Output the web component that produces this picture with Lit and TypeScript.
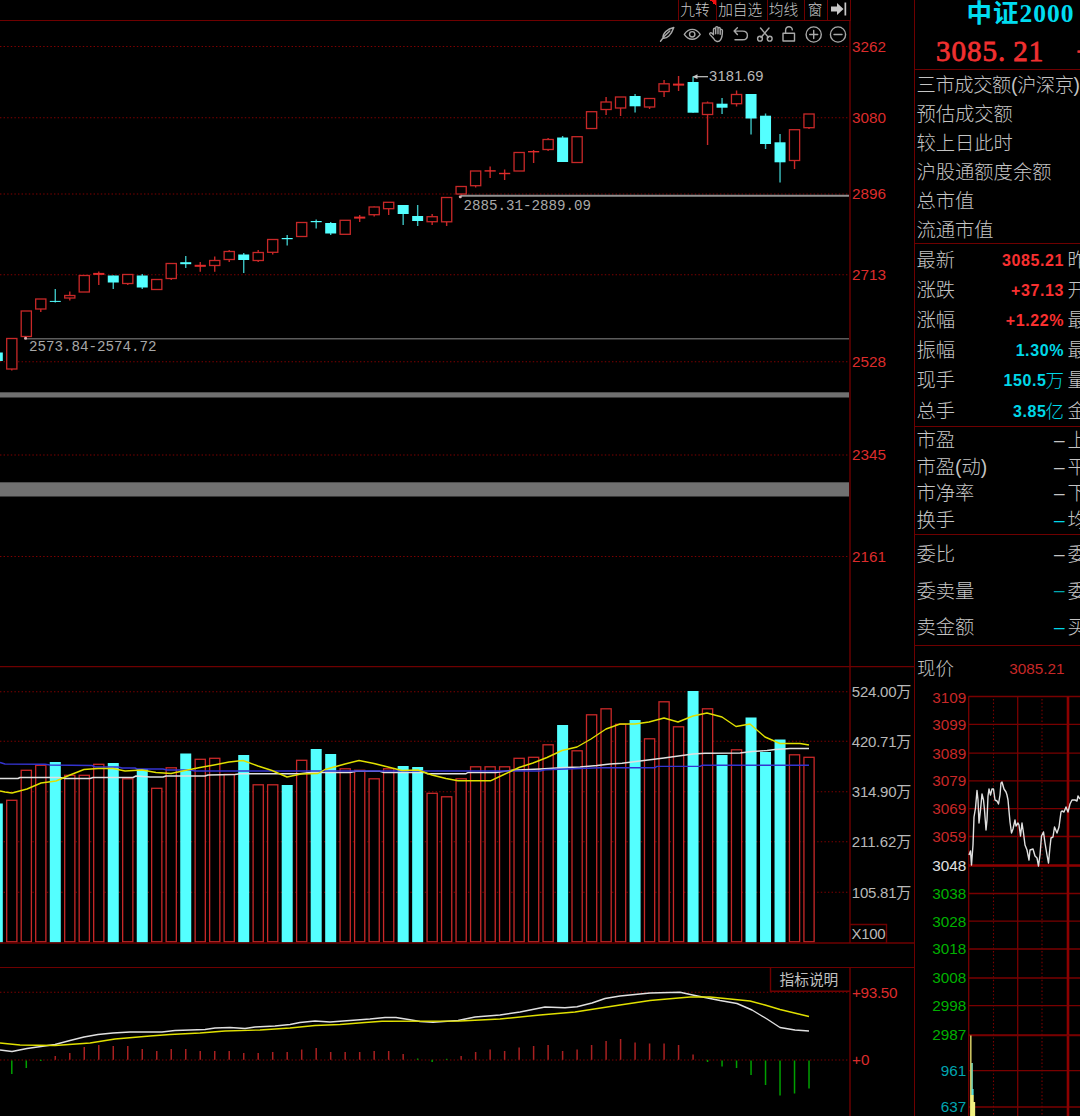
import { LitElement, html, svg, css } from "lit";
import { customElement } from "lit/decorators.js";

/** [kind, body top, body bottom, high, low, volume top, histogram end]; kind u = up, d = down */
type Day = [string, number, number, number, number, number, number];

const DAYS: Day[] = [
  ["d", 352.5, 361, 352.5, 361, 803.5, 1060],
  ["u", 338.5, 369, 338.5, 370.5, 800, 1074],
  ["u", 311, 336.5, 311, 338, 770, 1068],
  ["u", 299, 309, 299, 312, 765, 1061],
  ["d", 300.9, 301.9, 289, 302.5, 762, 1056],
  ["u", 295.5, 298, 291.5, 300.5, 775, 1053],
  ["u", 275.5, 292, 275.5, 292, 775, 1047],
  ["u", 273.3, 274.5, 271.5, 285, 764, 1045],
  ["d", 275.5, 282.5, 275.5, 289, 763, 1046],
  ["u", 274.5, 283.5, 274.5, 285, 778.5, 1046],
  ["d", 275.5, 287.5, 274, 289, 769, 1049],
  ["u", 279.5, 289.5, 279.5, 289.5, 788, 1051],
  ["u", 263.5, 278.5, 263.5, 280, 767.5, 1049],
  ["d", 262.2, 264.2, 256, 268, 753.5, 1049],
  ["u", 265.2, 266.4, 262, 271.8, 759, 1051],
  ["u", 260.5, 265.5, 256.5, 271.8, 758, 1051],
  ["u", 251.5, 259.5, 250, 262, 774, 1051],
  ["d", 254.5, 260, 253, 273, 755, 1053],
  ["u", 252.5, 260.5, 250, 262, 784.5, 1053],
  ["u", 239.5, 252.3, 239.5, 254.5, 784.5, 1052],
  ["d", 238, 239.2, 235, 245.5, 785, 1052],
  ["u", 222.5, 236.5, 222.5, 236.5, 760, 1049.5],
  ["d", 221, 222.2, 219.5, 228.5, 749, 1048],
  ["d", 223, 233.5, 222, 235, 754, 1052],
  ["u", 220.3, 234.3, 220.3, 234.3, 768.5, 1052],
  ["u", 217, 218.2, 215, 222, 770, 1052],
  ["u", 207, 214.7, 206.5, 216.5, 778.5, 1051],
  ["u", 202.3, 208.7, 202.3, 215, 768.5, 1051],
  ["d", 205, 214, 205, 225, 766, 1054],
  ["d", 216, 221, 205, 226, 767, 1058.5],
  ["u", 216.7, 221.7, 214, 225, 793, 1062],
  ["u", 197.5, 221.8, 197.5, 226, 796.5, 1058.8],
  ["u", 186.5, 194, 186.5, 195, 778.5, 1056],
  ["u", 171, 185.7, 171, 187.5, 766.5, 1052],
  ["u", 170.6, 171.2, 166.5, 178, 766.5, 1049.5],
  ["u", 173.2, 173.8, 169.5, 180, 766.5, 1051],
  ["u", 152.5, 171, 152.5, 171, 758, 1047.5],
  ["u", 151.4, 152, 150, 163, 757, 1046],
  ["u", 139.5, 149.5, 138, 151, 744.5, 1045],
  ["d", 137.5, 162, 136, 162, 725, 1051],
  ["u", 136.7, 162.5, 136.7, 162.5, 750.5, 1049.5],
  ["u", 111.7, 128.5, 111.7, 128.5, 714.5, 1045],
  ["u", 102, 109.5, 97, 115, 708.5, 1041],
  ["u", 97, 108, 97, 116, 724, 1039],
  ["d", 96, 106.3, 94, 112.5, 720, 1042.5],
  ["u", 98.5, 107, 98.5, 109, 738.5, 1043.5],
  ["u", 83.8, 91.5, 80, 97, 701.5, 1043.5],
  ["u", 84, 85.2, 76, 91, 726.5, 1045],
  ["d", 82, 112.7, 76.5, 112.7, 691, 1054.5],
  ["u", 103, 114.5, 101.5, 145, 708.5, 1062],
  ["d", 103.7, 107.7, 98, 114, 755, 1066.5],
  ["u", 94.5, 103.7, 90.5, 106.5, 749.5, 1068],
  ["d", 94, 118.5, 94, 134.5, 717.5, 1075],
  ["d", 115.7, 144, 113.5, 149, 752, 1085],
  ["d", 142.3, 162.3, 134, 182.5, 739.5, 1095.5],
  ["u", 129.7, 160.5, 129.7, 169, 754.5, 1093.5],
  ["u", 114, 127.7, 114, 129, 757, 1088.5],
];
const dayX = (i: number) => 11.8 + 14.495 * (i - 1);
const HALF = 5.1;

const VOL_FAST =
  "0,791 5,792 12,793 27,789 41,783 56,781 70,775 84,769.5 98,768.5 113,768.5 125,771 142,770 156,772.5 171,773.5 185,770.5 200,767.5 214,765 229,762 243,760.5 258,766 272,770.5 287,777 301,774 318,773.5 325,769.5 345,764 359,760.5 374,763.5 388,767 402,770.5 418,770 432,775 446,778.5 458,780.7 491,780.7 505,774 519,767.5 533,763 547,757.5 562,750.5 577,747 591,739 606,729 620,724 635,724 649,722 664,718 678,722 693,716 707,713 722,717 736,726.5 750,724 765,737 780,743.5 800,743.5 809,745";
const VOL_MID =
  "0,778.5 18,778.5 20,777.5 60,777.5 65,778.5 90,778.5 93,777.5 133,777.5 136,776 150,777 163,777 166,776 205,776 208,775 235,774.5 240,773.7 300,773.7 310,772.5 350,772.5 356,771.3 380,771.3 384,772.5 425,772.5 427,773.7 466,773.7 468,772.5 496,772.5 512,770.3 540,769 565,767.5 580,767 597,765.5 610,764 622,763.3 640,761 664,758 693,754 705,753.3 740,753 752,751.5 767,750.5 775,749.5 790,748.5 809,748.5";
const VOL_SLOW =
  "0,762.5 5,764 45,764.3 50,765 92,765.5 95,767 118,767 122,768 135,768 137,769 163,769 167,770 190,770 195,771 540,771 545,769.7 600,767.7 655,767.7 657,766.4 700,766.4 702,765.3 809,765.3";
const DIF =
  "0,1050 12,1051.5 27,1048.5 41,1046.5 55,1044.5 70,1040.5 84,1037 98,1034.5 113,1033 130,1032 162,1032 175,1030.5 205,1029.5 215,1028 230,1027.5 245,1028.5 255,1027 275,1026 290,1024.5 300,1022.5 315,1021 330,1022 350,1020.5 370,1019 385,1017.5 396,1017.5 410,1019.7 420,1021.5 433,1022.3 458,1020.5 475,1017 500,1015 520,1012 545,1007 565,1007.7 577,1006.7 592,1003 605,998.5 620,996 650,993 680,992.3 695,995.5 720,1000.5 737,1003.5 752,1010 767,1019 780,1027.5 795,1030 809,1031";
const DEA =
  "0,1043 20,1045 55,1045.5 90,1043 115,1039 150,1036 170,1034.5 200,1033 225,1031 260,1030 290,1028 315,1025.5 340,1024.5 365,1022.5 382,1021.3 460,1021 500,1019 540,1015 575,1012 620,1005 650,1000.5 690,997 710,997 750,1001 765,1005 780,1009.5 809,1016.5";
const PRICE =
  "969,855 970.5,851 971.5,865 973,845 974,817 975.5,808 977,790.5 978,800 979,823 980.5,810 982,794 983.5,800 984.5,810 986,830 987,820 988,796 989,789 990.5,795 992,789 993.5,789 995,800 997,801 998.5,804 1000,795 1001,783 1002,782 1004,789 1006,792 1007,795 1008,800 1010,822 1011.5,833 1013,829 1015,820 1016,826 1018,823 1019,825 1020.5,836 1022,823 1023.5,833 1025,845 1027,850 1029,860 1030,850 1033,849 1035,856 1037,858 1038.5,866 1040,855 1041.5,836 1043.5,832 1045,843 1047,855 1048.5,863 1050,847 1051,838 1053,837 1054.5,827 1057,833 1059,827 1061,812 1062,811 1064,812 1066,807 1068,812 1070,804 1072,800 1075,800 1077,801 1078,796 1080,799";

const chartStyles = css`
  :host { display: block; }
  svg { display: block; }
  text { font-family: "Liberation Sans", "Noto Sans CJK SC", sans-serif; }
  .rule { stroke: #6e0000; stroke-width: 1.4; fill: none; }
  .dots { stroke: #800000; stroke-width: 1.1; stroke-dasharray: 1.4 2.2; fill: none; }
  .up { fill: #000; stroke: #c82828; stroke-width: 1.3; }
  .flat { fill: #e02c2c; }
  .wick-up { stroke: #c82828; stroke-width: 1.4; }
  .down { fill: #54ffff; }
  .wick-down { stroke: #3cc0c0; stroke-width: 1.4; }
  .price { fill: #dc2c2c; font-size: 15.3px; }
  .qty { fill: #b8b8b8; font-size: 15px; }
  .note { fill: #a8a8a8; font-family: "Liberation Mono", monospace; font-size: 14.2px; }
  .peak { fill: #b8b8b8; font-size: 14.7px; }
  .zone { fill: #707070; }
  .line { fill: none; stroke-width: 1.4; stroke-linejoin: round; }
  .yellow { stroke: #e0e000; }
  .white { stroke: #e0e0e0; }
  .blue { stroke: #3434d0; }
`;

@customElement("candle-chart")
class CandleChart extends LitElement {
  static styles = [chartStyles, css`
    .icon { fill: none; stroke: #a8a8a8; stroke-width: 1.4; stroke-linecap: round; stroke-linejoin: round; }
    .arrow { stroke: #c8c8c8; stroke-width: 1.2; fill: none; }
  `];
  render() {
    const levels: [number, string][] = [
      [46.5, "3262"], [117.7, "3080"], [194, "2896"], [274.8, "2713"],
      [361.7, "2528"], [455, "2345"], [556.5, "2161"],
    ];
    return html`<svg width="914" height="645" viewBox="0 21 914 645">
      ${levels.map(([y, t]) => svg`
        <path class="dots" d="M0 ${y}H849"/>
        <text class="price" x="852" y=${y + 5.2}>${t}</text>`)}
      <rect class="zone" x="0" y="392.3" width="849" height="5.2"/>
      <rect class="zone" x="0" y="482.3" width="849" height="14.2"/>
      <path d="M26 338.7H849" stroke="#5c5c5c" stroke-width="1.4"/>
      <path d="M461 195.7H849" stroke="#909090" stroke-width="2"/>
      ${DAYS.map(([k, t, b, h, l], i) => {
        const x = dayX(i);
        if (k === "d") {
          return svg`<path class="wick-down" d="M${x} ${h}V${l}"/><rect class="down" x=${x - 5.5} y=${t} width="11" height=${b - t}/>`;
        }
        const body = b - t < 2
          ? svg`<rect class="flat" x=${x - 5.6} y=${t - 0.4} width="11.2" height=${b - t + 0.8}/>`
          : svg`<rect class="up" x=${x - HALF} y=${t} width=${HALF * 2} height=${b - t}/>`;
        return svg`<path class="wick-up" d="M${x} ${h}V${l}"/>${body}`;
      })}
      <circle cx="25.5" cy="338.3" r="1.5" fill="#d8b0b0"/>
      <circle cx="460.3" cy="196.8" r="1.5" fill="#d8b0b0"/>
      <text class="note" x="29" y="351" textLength="127.5">2573.84-2574.72</text>
      <text class="note" x="463.5" y="210" textLength="127.5">2885.31-2889.09</text>
      <path class="arrow" d="M693.5 76.7H708"/>
      <path d="M692.5 76.7l5-2.4v4.8z" fill="#c8c8c8"/>
      <text class="peak" x="709" y="81" textLength="54.5">3181.69</text>
      <path class="rule" d="M850 21V666"/>
      <g class="icon">
        <path d="M660.5 41.2l4-5.2M663 38.300c-.6-4.800 4.500-9.600 10.800-10.800c-1 3-2.600 6-5 8.600c-1.700 1.700-3.600 2.400-5.800 2.200zM664.600 36l5.200-5"/>
        <path d="M684.300 34.300c4.500-6.600 11.400-6.600 15.900 0c-4.500 6.600-11.400 6.600-15.900 0z"/><circle cx="692.2" cy="34.300" r="2.700"/>
        <path d="M713.600 38.500l-3.600-3.900c-1-1.300.6-2.500 1.800-1.500l1.700 1.600v-5.200c0-1.600 2.100-1.600 2.200 0v4.300v-6c0-1.600 2.300-1.600 2.300 0v6v-5.200c0-1.500 2.200-1.500 2.200 0v5.600v-3.800c0-1.500 2.200-1.400 2.200.1c0 3.500.2 6.500-1.900 9.400c-1.600 2.400-5.300 2.200-6.900-1.400z"/>
        <path d="M737.400 27.800l-3.300 3.300l3.300 3.300M734.300 31.100h8.300c6.400 0 6.400 8.600 0 8.600h-7.600"/>
        <path d="M760.500 28l8 9.500M769 28l-8 9.500"/><circle cx="760" cy="38.700" r="2.400"/><circle cx="769.700" cy="38.700" r="2.400"/>
        <path d="M783 33.300h11.500v7.700h-11.500zM785.600 33.300v-3c0-4.700 6.700-4.700 6.700-.4"/>
        <circle cx="813.700" cy="34.500" r="7.600"/><path d="M809.700 34.500h8M813.700 30.500v8"/>
        <circle cx="838" cy="34.500" r="7.600"/><path d="M834 34.500h8"/>
      </g>
    </svg>`;
  }
}

@customElement("volume-chart")
class VolumeChart extends LitElement {
  static styles = chartStyles;
  render() {
    const levels: [number, string][] = [
      [691.7, "524.00万"], [741.2, "420.71万"], [791.7, "314.90万"], [841.7, "211.62万"], [892.3, "105.81万"],
    ];
    return html`<svg width="914" height="278" viewBox="0 666 914 278">
      ${levels.map(([y, t]) => svg`
        <path class="dots" d="M0 ${y}H849"/>
        <text class="qty" x="851.8" y=${y + 5.6} textLength="59.5">${t}</text>`)}
      ${DAYS.map(([k, , , , , v], i) => {
        const x = dayX(i);
        return k === "u"
          ? svg`<rect class="up" x=${x - HALF} y=${v + 0.3} width=${HALF * 2} height=${941.5 - v}/>`
          : svg`<rect class="down" x=${x - 5.5} y=${v} width="11" height=${942.5 - v}/>`;
      })}
      <polyline class="line white" points=${VOL_MID}/>
      <polyline class="line blue" points=${VOL_SLOW}/>
      <polyline class="line yellow" points=${VOL_FAST}/>
      <path class="rule" d="M0 666.5H914M850 666V943M0 943H914M850 924.5H886.5V943"/>
      <text class="qty" x="851.5" y="938.5" textLength="34">X100</text>
    </svg>`;
  }
}

@customElement("macd-chart")
class MacdChart extends LitElement {
  static styles = [chartStyles, css`
    .bar-up { stroke: #a82020; stroke-width: 1.5; }
    .bar-down { stroke: #00a000; stroke-width: 1.5; }
    .tag { fill: #c0c0c0; font-size: 14.7px; }
  `];
  render() {
    return html`<svg width="914" height="149" viewBox="0 967 914 149">
      <path class="dots" d="M0 992.3H849M0 1060H849"/>
      ${DAYS.map((d, i) => {
        const end = d[6];
        const down = end > 1058;
        return end === 1060 ? null : svg`<path class=${down ? "bar-down" : "bar-up"} d="M${dayX(i)} ${end > 1063 ? 1060.5 : 1059.8}V${end}"/>`;
      })}
      <polyline class="line white" points=${DIF}/>
      <polyline class="line yellow" points=${DEA}/>
      <rect x="770.5" y="967" width="79.5" height="24" fill="#000"/>
      <path class="rule" d="M0 967.2H914M850 967V1116M770.5 967V991.3H850"/>
      <text class="tag" x="779.5" y="985">指标说明</text>
      <text class="price" x="852" y="997.6" textLength="45.5">+93.50</text>
      <text class="price" x="852" y="1065.2">+0</text>
    </svg>`;
  }
}

@customElement("intraday-chart")
class IntradayChart extends LitElement {
  static styles = [chartStyles, css`
    .grid { stroke: #780000; stroke-width: 1.3; fill: none; }
    .heavy { stroke: #8c0000; stroke-width: 2.6; fill: none; }
    .tick { font-size: 15.3px; text-anchor: end; }
    .r { fill: #c82828; }
    .w { fill: #e0e0e0; }
    .g { fill: #00b000; }
    .c { fill: #00a4b0; }
  `];
  render() {
    const ticks: [number, string, string][] = [
      [697.5, "3109", "r"], [724.3, "3099", "r"], [753.2, "3089", "r"], [780.8, "3079", "r"],
      [808.7, "3069", "r"], [836.5, "3059", "r"], [865.7, "3048", "w"], [893.5, "3038", "g"],
      [921.2, "3028", "g"], [949, "3018", "g"], [978, "3008", "g"], [1005.7, "2998", "g"],
      [1035, "2987", "g"], [1070.7, "961", "c"], [1107, "637", "c"],
    ];
    return html`<svg width="165" height="432" viewBox="915 684 165 432">
      <path class="dots" d="M993.5 699V1116M1042 699V1116"/>
      ${ticks.map(([y, t, c]) => svg`
        <path class="grid" d="M968.5 ${y === 697.5 ? 696.5 : y}H1080"/>
        <text class="tick ${c}" x="966.3" y=${y + 5.4}>${t}</text>`)}
      <path class="grid" d="M968.7 696.5V1116M1017.7 696.5V1116"/>
      <path class="heavy" d="M1068 696.5V1116M968.5 865.5H1080"/>
      <path class="grid" stroke-width="2" d="M968.5 1035.5H1080"/>
      <polyline class="line white" points=${PRICE}/>
      <path d="M970 1035.5h1.6V1063h1v32h1v7h1.600v14h-5.200z" fill="#c8c060"/>
      <path d="M971.6 1063h1V1089h1v6h-2z" fill="#54e0e0"/>
      <path d="M970.5 1095h3v7h1.500v14h-4.500z" fill="#f0f080"/>
    </svg>`;
  }
}

type Row = [label: string, value: string, tone: string, next: string, unit?: string];

@customElement("quote-panel")
class QuotePanel extends LitElement {
  static styles = css`
    :host { display: flex; flex-direction: column; width: 165px; overflow: hidden; color: #c4c4c4;
      font-family: "Liberation Sans", "Noto Sans CJK SC", sans-serif; }
    .head { box-sizing: border-box; height: 70px; border-bottom: 1.5px solid #6e0000; overflow: hidden; }
    .name { height: 29px; padding-left: 51.5px; color: #00dcf0; white-space: nowrap;
      font: 700 25.5px/28px "Liberation Serif", "Noto Sans CJK SC", serif; letter-spacing: 1px; }
    .last { display: flex; padding-left: 21px; color: #f03030; white-space: nowrap;
      font: 29px/45px "Liberation Serif", serif; letter-spacing: 1px; -webkit-text-stroke: .8px #f03030; }
    .point { padding-right: 7px; }
    .sign { padding-left: 32px; }
    .block { box-sizing: border-box; border-bottom: 1.5px solid #6e0000; display: grid; grid-auto-rows: var(--row); overflow: hidden; }
    .market { --row: 29px; height: 174px; padding-top: 1.2px; }
    .quote { --row: 30.2px; height: 182.5px; padding-top: 1.5px; }
    .ratio { --row: 26.6px; height: 108.5px; padding-top: 1.500px; }
    .order { --row: 36.4px; height: 111px; padding-top: 2px; }
    .row { display: flex; align-items: center; white-space: nowrap; padding-left: 1.5px; font-size: 19.3px; line-height: 24px; font-weight: 300; min-width: 0; }
    .label { flex: 1 0 auto; }
    .narrow { letter-spacing: -.4px; }
    .value { font-size: 16px; font-weight: 700; letter-spacing: .6px; padding-right: 3.5px; display: flex; align-items: center; }
    .unit { font-size: 18.5px; font-weight: 300; letter-spacing: 0; margin-left: -1px; }
    .dash { font-size: 19px; font-weight: 400; letter-spacing: 0; padding: 0 3px 2.500px 0; }
    .next { width: 12.5px; flex: none; overflow: hidden; }
    .red { color: #f83030; }
    .cyan { color: #00d8e8; }
    .teal { color: #00a8b0; }
    .now { display: flex; align-items: center; justify-content: space-between; height: 38px; padding: 4px 15.5px 0 2px; font-size: 18.5px; box-sizing: border-box; font-weight: 300; }
    .now-value { color: #c82828; font-size: 15.3px; font-weight: 400; padding-top: 4px; }
  `;
  private rows(list: Row[]) {
    return list.map(([label, value, tone, next, unit]) => html`<div class="row">
      <span class="label">${label}</span>
      <span class="value ${tone} ${value === "–" ? "dash" : ""}">${value}${unit ? html`<span class="unit">${unit}</span>` : null}</span>
      <span class="next">${next}</span>
    </div>`);
  }
  render() {
    const market = ["三市成交额(沪深京)", "预估成交额", "较上日此时", "沪股通额度余额", "总市值", "流通市值"];
    return html`
      <div class="head">
        <div class="name">中证2000</div>
        <div class="last"><span>3085</span><span class="point">.</span><span>21</span><span class="sign">+</span></div>
      </div>
      <div class="block market">${market.map((m) => html`<div class="row"><span class=${m.includes("(") ? "narrow" : ""}>${m}</span></div>`)}</div>
      <div class="block quote">${this.rows([
        ["最新", "3085.21", "red", "昨"],
        ["涨跌", "+37.13", "red", "开"],
        ["涨幅", "+1.22%", "red", "最"],
        ["振幅", "1.30%", "cyan", "最"],
        ["现手", "150.5", "cyan", "量", "万"],
        ["总手", "3.85", "cyan", "金", "亿"],
      ])}</div>
      <div class="block ratio">${this.rows([
        ["市盈", "–", "", "上"],
        ["市盈(动)", "–", "", "平"],
        ["市净率", "–", "", "下"],
        ["换手", "–", "cyan", "均"],
      ])}</div>
      <div class="block order">${this.rows([
        ["委比", "–", "", "委"],
        ["委卖量", "–", "teal", "委"],
        ["卖金额", "–", "cyan", "买"],
      ])}</div>
      <div class="now"><span>现价</span><span class="now-value">3085.21</span></div>
      <intraday-chart></intraday-chart>
    `;
  }
}

@customElement("app-root")
class AppRoot extends LitElement {
  static styles = css`
    :host { display: flex; width: 1080px; height: 1116px; background: #000; overflow: hidden; }
    .charts { display: flex; flex-direction: column; width: 914px; box-sizing: border-box; flex: none; }
    .toolbar { display: flex; justify-content: flex-end; width: 850.7px; height: 21px; box-sizing: border-box;
      border-bottom: 1.4px solid #6e0000; border-right: 1.4px solid #6e0000; color: #c8c8c8;
      font: 300 14.7px/16px "Noto Sans CJK SC", sans-serif; }
    .tool { box-sizing: border-box; border-left: 1.4px solid #6e0000; display: flex; justify-content: center; align-items: center; white-space: nowrap; padding-bottom: 2px; }
    .t1 { width: 37.5px; padding-right: 5px; background: linear-gradient(45deg, transparent 50%, #f01010 50%) right top / 6px 6px no-repeat; }
    .t2 { width: 51px; padding-right: 3px; }
    .t3 { width: 37.5px; padding-right: 5px; }
    .t4 { width: 23px; padding-right: 2px; }
    .t5 { width: 22.5px; }
    .gap { height: 23px; }
    .side { display: flex; box-sizing: border-box; width: 166px; border-left: 1.5px solid #6e0000; }
    svg { display: block; }
  `;
  render() {
    return html`
      <div class="charts">
        <div class="toolbar">
          <span class="tool t1">九转</span>
          <span class="tool t2">加自选</span>
          <span class="tool t3">均线</span>
          <span class="tool t4">窗</span>
          <span class="tool t5"><svg width="16" height="14" viewBox="0 0 16 14"><path d="M0 4.5h6V1l6.5 6L6 13V9.5H0zM13.5 0.500h1.700v13h-1.700z" fill="#c8c8c8"/></svg></span>
        </div>
        <candle-chart></candle-chart>
        <volume-chart></volume-chart>
        <div class="gap"></div>
        <macd-chart></macd-chart>
      </div>
      <div class="side"><quote-panel></quote-panel></div>
    `;
  }
}
